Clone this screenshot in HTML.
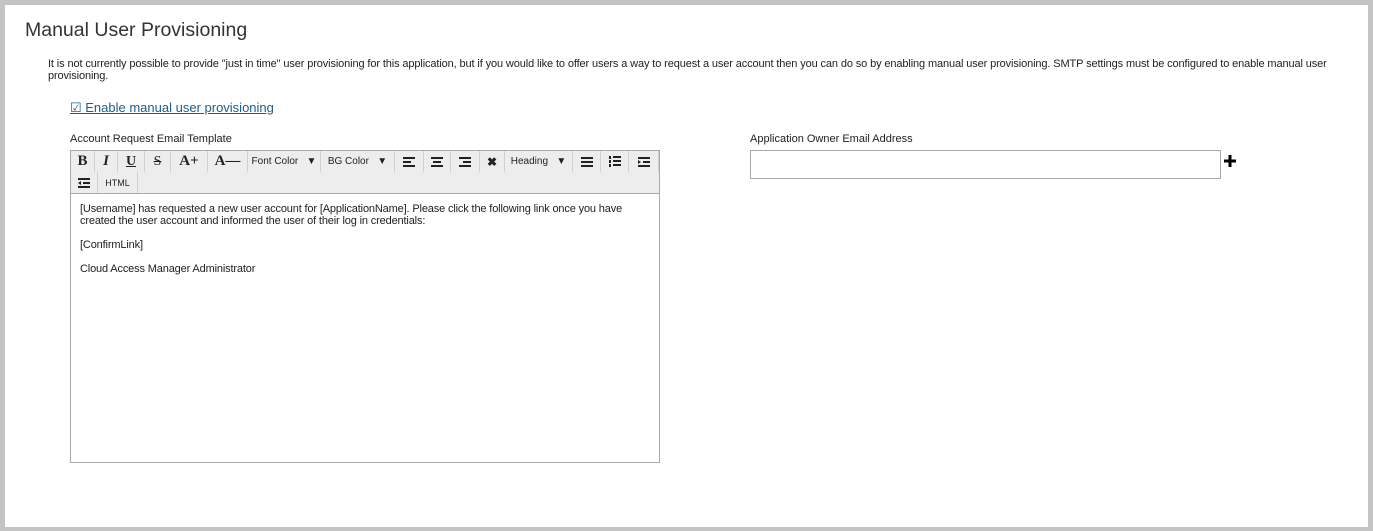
<!DOCTYPE html>
<html><head><meta charset="utf-8"><style>
*{margin:0;padding:0;box-sizing:border-box}
body{width:1373px;height:531px;background:#c4c4c4;position:relative;overflow:hidden;font-family:"Liberation Sans",sans-serif;color:#222}
#pg{position:absolute;left:5px;top:5px;width:1363px;height:522px;background:#fff}
.a{position:absolute;white-space:nowrap}
h1{position:absolute;left:20px;top:14px;font-weight:normal;font-size:19.5px;color:#333;white-space:nowrap}
.p{font-size:11px;line-height:12px;color:#222}
.tb{position:absolute;left:65px;top:145px;width:590px;height:313px;border:1px solid #aaa;background:#fff}
.bar{position:absolute;left:0;top:0;width:588px;height:43px;background:#ededed;border-bottom:1px solid #aaa}
.btn{position:absolute;height:21px;border-right:1px solid #d0d0d0;font-size:10px;display:flex;align-items:center;justify-content:center;color:#222}
.ed{position:absolute;left:9px;top:52px;width:570px;font-size:11px;line-height:12px;letter-spacing:-0.15px}
.inp{position:absolute;left:745px;top:145px;width:471px;height:29px;border:1px solid #aaa}
</style></head><body><div id="pg">
<h1>Manual User Provisioning</h1>
<div class="a p" style="left:43px;top:53px;white-space:normal;width:1290px;letter-spacing:-0.12px">It is not currently possible to provide "just in time" user provisioning for this application, but if you would like to offer users a way to request a user account then you can do so by enabling manual user provisioning. SMTP settings must be configured to enable manual user provisioning.</div>
<div class="a" style="left:65px;top:95px;font-size:13px;color:#1b5e8c;text-decoration:underline">&#9745; Enable manual user provisioning</div>
<div class="a p" style="left:65px;top:128px">Account Request Email Template</div>
<div class="a p" style="left:745px;top:128px">Application Owner Email Address</div>
<div class="inp"></div>
<svg class="a" style="left:1219px;top:150px" width="12" height="12" viewBox="0 0 12 12"><path d="M4.5 0h3v4.5H12v3H7.5V12h-3V7.5H0v-3h4.5z" fill="#000"/></svg>
<div class="tb"><div class="bar">
<div class="btn" style="left:0;width:24px;font-family:'Liberation Serif';font-weight:bold;font-size:15px">B</div>
<div class="btn" style="left:24px;width:23px;font-family:'Liberation Serif';font-style:italic;font-weight:bold;font-size:15px">I</div>
<div class="btn" style="left:47px;width:27px;font-family:'Liberation Serif';font-weight:bold;text-decoration:underline;font-size:14px">U</div>
<div class="btn" style="left:74px;width:26px;font-family:'Liberation Serif';text-decoration:line-through;font-size:14px">S</div>
<div class="btn" style="left:100px;width:37px;font-family:'Liberation Serif';font-weight:bold;font-size:15px">A+</div>
<div class="btn" style="left:137px;width:40px;font-family:'Liberation Serif';font-weight:bold;font-size:15px">A&#8212;</div>
<div class="btn" style="left:177px;width:73px">Font Color&nbsp;&nbsp;&nbsp;&#9660;</div>
<div class="btn" style="left:250px;width:74px">BG Color&nbsp;&nbsp;&nbsp;&#9660;</div>
<div class="btn" style="left:324px;width:29px"><svg width="12" height="10"><path d="M0 0h12v2H0zM0 4h8v2H0zM0 8h12v2H0z" fill="#222"/></svg></div>
<div class="btn" style="left:353px;width:27px"><svg width="12" height="10"><path d="M0 0h12v2H0zM2 4h8v2H2zM0 8h12v2H0z" fill="#222"/></svg></div>
<div class="btn" style="left:380px;width:29px"><svg width="12" height="10"><path d="M0 0h12v2H0zM4 4h8v2H4zM0 8h12v2H0z" fill="#222"/></svg></div>
<div class="btn" style="left:409px;width:25px;font-size:12px;font-weight:bold">&#10006;</div>
<div class="btn" style="left:434px;width:68px">Heading&nbsp;&nbsp;&nbsp;&#9660;</div>
<div class="btn" style="left:502px;width:28px"><svg width="12" height="10"><path d="M0 0h12v2H0zM0 4h12v2H0zM0 8h12v2H0z" fill="#222"/></svg></div>
<div class="btn" style="left:530px;width:28px"><svg width="12" height="11"><path d="M0 0h2v3H0zM0 4h2v3H0zM0 8h2v3H0zM4 0h8v2H4zM4 4h8v2H4zM4 8h8v2H4z" fill="#222"/></svg></div>
<div class="btn" style="left:558px;width:30px"><svg width="12" height="10"><path d="M0 0h12v2H0zM5 4h7v2H5zM0 8h12v2H0zM0 3l3 2-3 2z" fill="#222"/></svg></div>
<div class="btn" style="left:0;top:21px;width:27px"><svg width="12" height="10"><path d="M0 0h12v2H0zM5 4h7v2H5zM0 8h12v2H0zM3 3L0 5l3 2z" fill="#222"/></svg></div>
<div class="btn" style="left:27px;top:21px;width:40px;font-size:9px">HTML</div>
</div>
<div class="ed">[Username] has requested a new user account for [ApplicationName]. Please click the following link once you have created the user account and informed the user of their log in credentials:<br><br>[ConfirmLink]<br><br>Cloud Access Manager Administrator</div>
</div>
</div></body></html>
